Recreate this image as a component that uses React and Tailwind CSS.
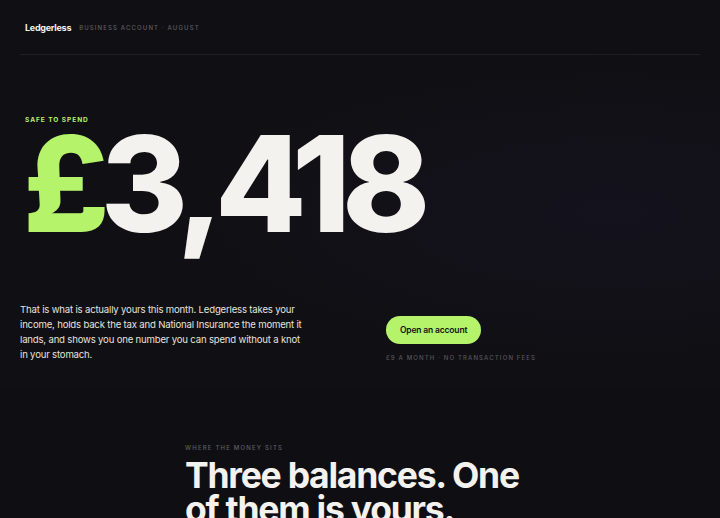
import React from 'react';

const font = { fontFamily: 'Inter, "Noto Sans", sans-serif' };

export default function App() {
    return (
        <div className="min-h-[518px] bg-[#0f0f13] text-[#f4f2ee] overflow-hidden" style={font}>
            {/* --- Hero --- */}
            <section className="bg-[#100f13] bg-[radial-gradient(ellipse_at_85%_55%,#14131d_0%,transparent_55%)] pb-[26px]">
                <header className="mx-5 flex items-center gap-[8px] border-b border-[#1f1e23] px-[5px] pt-[21px] pb-[19px]">
                    <span className="text-[9px] font-bold tracking-[-0.03em] text-[#f4f2ee]">Ledgerless</span>
                    <span className="text-[6px] font-medium tracking-[0.19em] text-[#5f5d64]">BUSINESS ACCOUNT · AUGUST</span>
                </header>

                <div className="px-[25px] pt-[61px]">
                    <p className="text-[6.5px] font-bold tracking-[0.15em] text-[#b5f36b]">SAFE TO SPEND</p>
                    <h1 className="mt-[12px] ml-[-2px] text-[133px] font-extrabold leading-[0.7] tracking-[-0.065em]">
                        <span className="text-[#b5f36b]">£</span>3,418
                    </h1>
                </div>

                <div className="mt-[72px] grid grid-cols-2 items-center gap-[52px] px-5">
                    <p className="max-w-[282px] text-[9.6px] leading-[15px] tracking-[-0.02em] text-[#e6e3df]">
                        That is what is actually yours this month. Ledgerless takes your income, holds back the tax and National Insurance the moment it lands, and shows you one number you can spend without a knot in your stomach.
                    </p>
                    <div className="flex flex-col items-start pt-[14px]">
                        <button className="h-[28px] rounded-full bg-[#b5f36b] px-[14px] text-[8.5px] font-semibold tracking-[-0.02em] text-[#111014]">
                            Open an account
                        </button>
                        <p className="mt-[9px] text-[6px] font-medium tracking-[0.19em] text-[#57555c]">£9 A MONTH · NO TRANSACTION FEES</p>
                    </div>
                </div>
            </section>

            {/* --- Balances --- */}
            <section className="ml-[185px] w-[360px] pt-[55px]">
                <p className="text-[6px] font-medium tracking-[0.2em] text-[#5f5d64]">WHERE THE MONEY SITS</p>
                <h2 className="mt-[7px] text-[35.5px] font-bold leading-[34px] tracking-[-0.035em] text-[#f4f2ee]">
                    Three balances. One of them is yours.
                </h2>
            </section>
        </div>
    );
}
